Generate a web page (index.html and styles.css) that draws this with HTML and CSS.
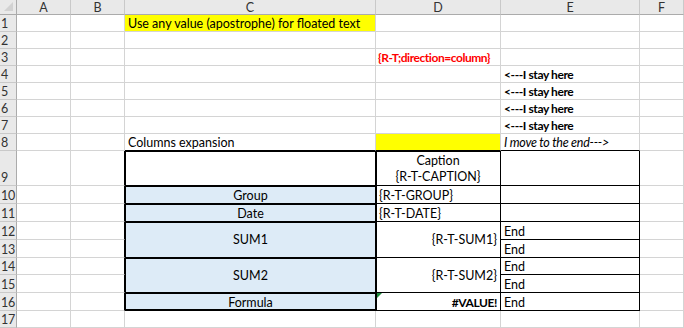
FILE: index.html
```html
<!DOCTYPE html>
<html>
<head>
<meta charset="utf-8">
<link rel="stylesheet" href="styles.css">
</head>
<body>
<div class="sheet">
  <div class="corner"></div><div class="ch">A</div><div class="ch">B</div><div class="ch">C</div><div class="ch">D</div><div class="ch">E</div><div class="ch">F</div>

  <div class="rh">1</div><div class="c"></div><div class="c"></div><div class="c yellow">Use any value (apostrophe) for floated text</div><div class="c"></div><div class="c"></div><div class="c"></div>
  <div class="rh">2</div><div class="c"></div><div class="c"></div><div class="c"></div><div class="c"></div><div class="c"></div><div class="c"></div>
  <div class="rh">3</div><div class="c"></div><div class="c"></div><div class="c"></div><div class="c red">{R-T;direction=column}</div><div class="c"></div><div class="c"></div>
  <div class="rh">4</div><div class="c"></div><div class="c"></div><div class="c"></div><div class="c"></div><div class="c bold">&lt;---I stay here</div><div class="c"></div>
  <div class="rh">5</div><div class="c"></div><div class="c"></div><div class="c"></div><div class="c"></div><div class="c bold">&lt;---I stay here</div><div class="c"></div>
  <div class="rh">6</div><div class="c"></div><div class="c"></div><div class="c"></div><div class="c"></div><div class="c bold">&lt;---I stay here</div><div class="c"></div>
  <div class="rh">7</div><div class="c"></div><div class="c"></div><div class="c"></div><div class="c"></div><div class="c bold">&lt;---I stay here</div><div class="c"></div>
  <div class="rh">8</div><div class="c"></div><div class="c"></div><div class="c t-top">Columns expansion</div><div class="c yellow t-top"></div><div class="c italic t-top">I move to the end---&gt;</div><div class="c"></div>

  <div class="rh">9</div><div class="c"></div><div class="c b-edge"></div><div class="c tc"></div><div class="c td td-first caption"><span>Caption</span><span>{R-T-CAPTION}</span></div><div class="c te"></div><div class="c"></div>
  <div class="rh">10</div><div class="c"></div><div class="c b-edge"></div><div class="c tc blue center">Group</div><div class="c td">{R-T-GROUP}</div><div class="c te"></div><div class="c"></div>
  <div class="rh">11</div><div class="c"></div><div class="c b-edge"></div><div class="c tc blue center">Date</div><div class="c td">{R-T-DATE}</div><div class="c te"></div><div class="c"></div>
  <div class="rh">12</div><div class="c"></div><div class="c b-edge"></div><div class="c tc blue center mid span2">SUM1</div><div class="c td right mid span2">{R-T-SUM1}</div><div class="c te">End</div><div class="c"></div>
  <div class="rh">13</div><div class="c"></div><div class="c b-edge"></div><div class="c te">End</div><div class="c"></div>
  <div class="rh">14</div><div class="c"></div><div class="c b-edge"></div><div class="c tc blue center mid span2">SUM2</div><div class="c td right mid span2">{R-T-SUM2}</div><div class="c te">End</div><div class="c"></div>
  <div class="rh">15</div><div class="c"></div><div class="c b-edge"></div><div class="c te">End</div><div class="c"></div>
  <div class="rh">16</div><div class="c"></div><div class="c b-edge"></div><div class="c tc tc-last blue center">Formula</div><div class="c td right bold err">#VALUE!</div><div class="c te">End</div><div class="c"></div>

  <div class="rh">17</div><div class="c"></div><div class="c"></div><div class="c"></div><div class="c"></div><div class="c"></div><div class="c"></div>
</div>
</body>
</html>
```
FILE: styles.css
```css
html, body {
  margin: 0;
  padding: 0;
  background: #ffffff;
  overflow: hidden;
}

.sheet {
  width: 684px;
  height: 328px;
  display: grid;
  grid-template-columns: 17px 54px 54px 251px 125px 139px 44px;
  grid-template-rows: 15px repeat(8, 17px) 35px 18px 18px 18px 18px 17px 18px 18px 17px;
  font-family: Lato, "Liberation Sans", sans-serif;
  font-size: 12.5px;
  line-height: 15px;
  color: #000;
  overflow: hidden;
}

.sheet > div {
  box-sizing: border-box;
  min-width: 0;
}

.corner {
  position: relative;
  background: #e9e9e9;
  border-right: 1px solid #ababab;
  border-bottom: 1px solid #ababab;
}

.corner::after {
  content: "";
  position: absolute;
  right: 3px;
  bottom: 3px;
  width: 0;
  height: 0;
  border-left: 9px solid transparent;
  border-bottom: 9px solid #d2d2d2;
}

.ch {
  background: #e9e9e9;
  border-right: 1px solid #c9c9c9;
  border-bottom: 1px solid #ababab;
  color: #333;
  display: flex;
  align-items: center;
  justify-content: center;
}

.rh {
  background: #e9e9e9;
  border-right: 1px solid #ababab;
  border-bottom: 1px solid #c9c9c9;
  color: #333;
  display: flex;
  align-items: flex-end;
  padding-left: 1px;
  letter-spacing: -0.3px;
}

.c {
  border-right: 1px solid #d4d4d4;
  border-bottom: 1px solid #d4d4d4;
  display: flex;
  align-items: flex-end;
  padding: 0 2px 0 3px;
  white-space: nowrap;
  position: relative;
}

.yellow { background: #ffff00; }
.blue { background: #ddebf7; }
.red { color: #ff0000; font-weight: bold; font-size: 12px; letter-spacing: -0.45px; padding-left: 2px; }
.bold { font-weight: bold; font-size: 12px; letter-spacing: -0.4px; }
.italic { font-style: italic; letter-spacing: -0.25px; }
.center { justify-content: center; }
.right { justify-content: flex-end; }
.mid { align-items: center; }
.span2 { grid-row: span 2; }

/* table borders */
.t-top { border-bottom-color: #000; }
.b-edge { border-right-color: #000; }

.tc {
  border-right-color: #000;
  border-bottom-color: #000;
  box-shadow: inset 1px 0 0 #000, inset 0 1px 0 #000;
}
.tc-last {
  box-shadow: inset 1px 0 0 #000, inset 0 1px 0 #000, inset 0 -1px 0 #000;
}

.td {
  border-right-color: #000;
  border-bottom-color: #000;
  box-shadow: inset 1px 0 0 #000;
  padding-right: 3px;
}
.td-first {
  box-shadow: inset 1px 0 0 #000, inset 0 1px 0 #000;
}

.te {
  border-right-color: #000;
  border-bottom-color: #000;
}

.caption {
  flex-direction: column;
  align-items: center;
  justify-content: flex-end;
  padding-bottom: 0;
  line-height: 16px;
}

.err::before {
  content: "";
  position: absolute;
  left: 1px;
  top: 0;
  width: 0;
  height: 0;
  border-top: 5px solid #1e8a3c;
  border-right: 5px solid transparent;
}
```
